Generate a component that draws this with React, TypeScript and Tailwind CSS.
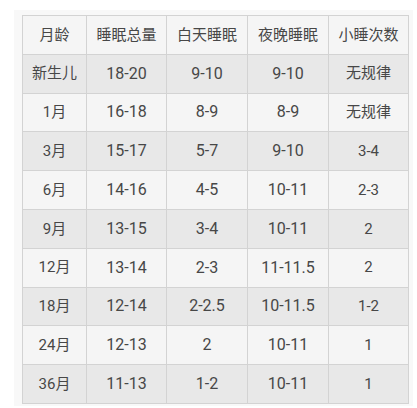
const header = ["月龄", "睡眠总量", "白天睡眠", "夜晚睡眠", "小睡次数"];

const rows = [
  ["新生儿", "18-20", "9-10", "9-10", "无规律"],
  ["1月", "16-18", "8-9", "8-9", "无规律"],
  ["3月", "15-17", "5-7", "9-10", "3-4"],
  ["6月", "14-16", "4-5", "10-11", "2-3"],
  ["9月", "13-15", "3-4", "10-11", "2"],
  ["12月", "13-14", "2-3", "11-11.5", "2"],
  ["18月", "12-14", "2-2.5", "10-11.5", "1-2"],
  ["24月", "12-13", "2", "10-11", "1"],
  ["36月", "11-13", "1-2", "10-11", "1"],
];

const App = () => {
  return (
    <div className="w-[417px] h-[408px] bg-white pt-[10px] pl-[14px] overflow-hidden">
      <div
        className="w-[399px] h-[396px] bg-[#f8f8f8] pt-[5px] pl-[8px]"
        style={{ fontFamily: 'Roboto, "Noto Sans CJK SC", sans-serif' }}
      >
        <div className="grid grid-cols-[63px_79px_80px_80px_79px] auto-rows-[37.8px] gap-px bg-[#d3d3d3] border border-[#d3d3d3] w-fit text-[16px] text-[#474747]">
          {header.map((h) => (
            <div key={h} className="flex items-center justify-center bg-[#f5f5f5] text-[15px]">
              {h}
            </div>
          ))}
          {rows.map((row, i) =>
            row.map((cell, j) => (
              <div
                key={`${i}-${j}`}
                className={`flex items-center justify-center ${
                  i % 2 === 0 ? "bg-[#e8e8e8]" : "bg-[#f5f5f5]"
                } ${j === 0 || j === 4 ? "text-[15px]" : ""}`}
              >
                {cell}
              </div>
            ))
          )}
        </div>
      </div>
    </div>
  );
};

export default App;
